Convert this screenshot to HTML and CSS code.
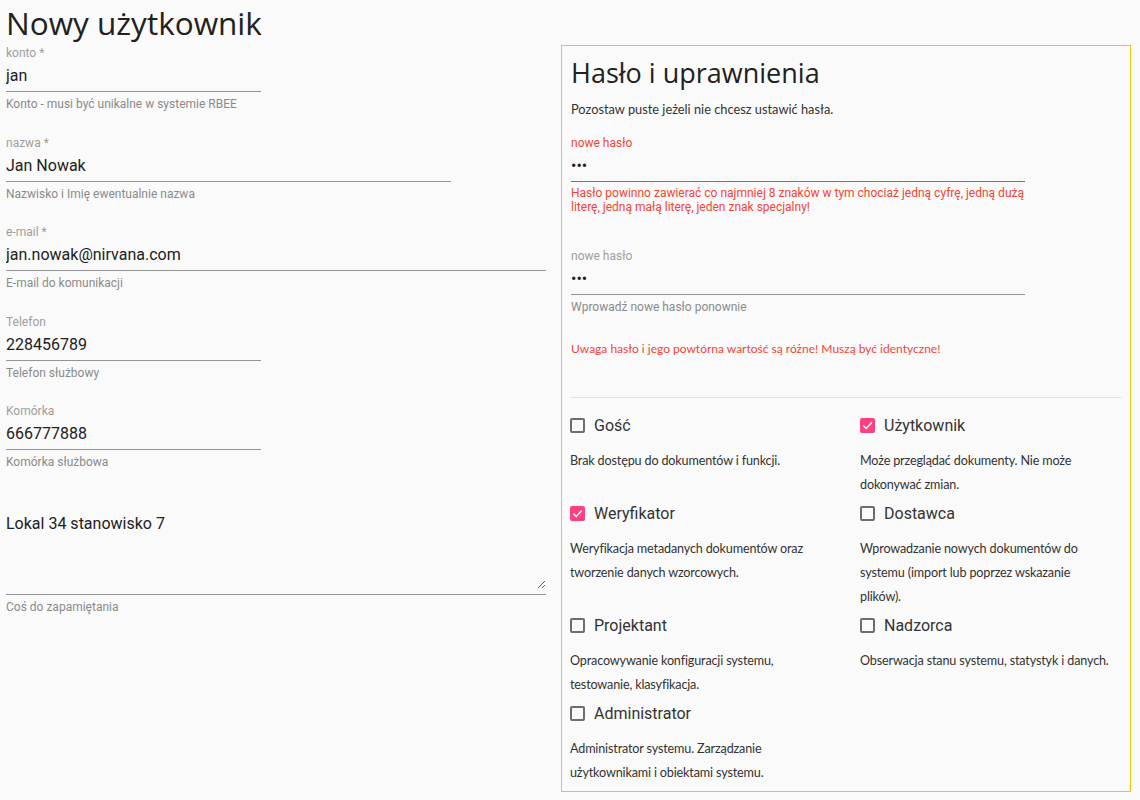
FILE: index.html
```html
<!DOCTYPE html>
<html lang="pl">
<head>
<meta charset="utf-8">
<title>Nowy użytkownik</title>
<link rel="stylesheet" href="styles.css">
</head>
<body>
<h1 class="title">Nowy użytkownik</h1>
<div class="layout">
  <div class="left">
    <div class="field w-s">
      <label class="lbl">konto *</label>
      <div class="control"><input class="inp" type="text" value="jan"></div>
      <div class="hint">Konto - musi być unikalne w systemie RBEE</div>
    </div>
    <div class="field w-m">
      <label class="lbl">nazwa *</label>
      <div class="control"><input class="inp" type="text" value="Jan Nowak"></div>
      <div class="hint">Nazwisko i Imię ewentualnie nazwa</div>
    </div>
    <div class="field w-l">
      <label class="lbl">e-mail *</label>
      <div class="control"><input class="inp" type="text" value="jan.nowak@nirvana.com"></div>
      <div class="hint">E-mail do komunikacji</div>
    </div>
    <div class="field w-s">
      <label class="lbl">Telefon</label>
      <div class="control"><input class="inp" type="text" value="228456789"></div>
      <div class="hint">Telefon służbowy</div>
    </div>
    <div class="field w-s">
      <label class="lbl">Komórka</label>
      <div class="control"><input class="inp" type="text" value="666777888"></div>
      <div class="hint">Komórka służbowa</div>
    </div>
    <div class="field w-l">
      <label class="lbl">&nbsp;</label>
      <div class="control"><textarea class="inp area">Lokal 34 stanowisko 7</textarea></div>
      <div class="hint">Coś do zapamiętania</div>
    </div>
  </div>

  <div class="panel">
    <h2 class="panel-title">Hasło i uprawnienia</h2>
    <p class="intro">Pozostaw puste jeżeli nie chcesz ustawić hasła.</p>

    <div class="field w-p first-pw">
      <label class="lbl lbl-err">nowe hasło</label>
      <div class="control control-err"><input class="inp pw" type="password" value="abc"></div>
      <div class="err">Hasło powinno zawierać co najmniej 8 znaków w tym chociaż jedną cyfrę, jedną dużą literę, jedną małą literę, jeden znak specjalny!</div>
    </div>
    <div class="field w-p second-pw">
      <label class="lbl">nowe hasło</label>
      <div class="control"><input class="inp pw" type="password" value="abd"></div>
      <div class="hint">Wprowadź nowe hasło ponownie</div>
    </div>
    <p class="warn">Uwaga hasło i jego powtórna wartość są różne! Muszą być identyczne!</p>
    <hr class="divider">

    <div class="roles">
      <div class="role">
        <div class="chk-row"><span class="box"></span><span class="role-name">Gość</span></div>
        <p class="desc">Brak dostępu do dokumentów i funkcji.</p>
      </div>
      <div class="role">
        <div class="chk-row"><span class="box on"><svg viewBox="0 0 15 15" width="15" height="15"><path d="M3.3 7.6 L6.2 10.4 L11.8 4.6" fill="none" stroke="#fff" stroke-width="1.4"/></svg></span><span class="role-name">Użytkownik</span></div>
        <p class="desc">Może przeglądać dokumenty. Nie może dokonywać zmian.</p>
      </div>
      <div class="role">
        <div class="chk-row"><span class="box on"><svg viewBox="0 0 15 15" width="15" height="15"><path d="M3.3 7.6 L6.2 10.4 L11.8 4.6" fill="none" stroke="#fff" stroke-width="1.4"/></svg></span><span class="role-name">Weryfikator</span></div>
        <p class="desc">Weryfikacja metadanych dokumentów oraz tworzenie danych wzorcowych.</p>
      </div>
      <div class="role">
        <div class="chk-row"><span class="box"></span><span class="role-name">Dostawca</span></div>
        <p class="desc">Wprowadzanie nowych dokumentów do systemu (import lub poprzez wskazanie plików).</p>
      </div>
      <div class="role">
        <div class="chk-row"><span class="box"></span><span class="role-name">Projektant</span></div>
        <p class="desc">Opracowywanie konfiguracji systemu, testowanie, klasyfikacja.</p>
      </div>
      <div class="role">
        <div class="chk-row"><span class="box"></span><span class="role-name">Nadzorca</span></div>
        <p class="desc">Obserwacja stanu systemu, statystyk i danych.</p>
      </div>
      <div class="role">
        <div class="chk-row"><span class="box"></span><span class="role-name">Administrator</span></div>
        <p class="desc">Administrator systemu. Zarządzanie użytkownikami i obiektami systemu.</p>
      </div>
    </div>
  </div>
</div>
</body>
</html>
```

FILE: styles.css
```css
html, body {
  margin: 0;
  padding: 0;
  background: #fafafa;
}
body {
  font-family: Lato, "Open Sans", sans-serif;
  color: #333;
  padding: 0 6px;
}
.title {
  margin: 0;
  font-family: "Open Sans", sans-serif;
  font-weight: 400;
  font-size: 31.5px;
  line-height: 45px;
  color: #212121;
}
.layout {
  display: flex;
  align-items: flex-start;
}
.left {
  width: 555px;
  flex: none;
}
.field {
  margin-bottom: 22.5px;
  font-family: Roboto, "Liberation Sans", sans-serif;
}
.w-s { width: 255px; }
.w-m { width: 445px; }
.w-l { width: 540px; }
.w-p { width: 454px; }
.lbl {
  display: block;
  font-size: 12px;
  line-height: 16px;
  color: #9e9e9e;
}
.lbl-err { color: #f44336; }
.control {
  padding-bottom: 5px;
  border-bottom: 1px solid #949494;
  margin-top: 5px;
}
.control-err { border-bottom-color: #f44336; }
.inp {
  display: block;
  width: 100%;
  box-sizing: border-box;
  border: 0;
  padding: 0;
  margin: 0;
  background: transparent;
  outline: none;
  font-family: Roboto, "Liberation Sans", sans-serif;
  font-size: 16px;
  line-height: 20px;
  height: 20px;
  color: #212121;
}
.area {
  height: 75px;
  resize: vertical;
}
.hint {
  margin-top: 4px;
  font-size: 12px;
  line-height: 16px;
  color: #8a8a8a;
}
.err {
  margin-top: 4px;
  font-size: 12px;
  line-height: 14px;
  color: #f44336;
}
.panel {
  flex: none;
  width: 570px;
  box-sizing: border-box;
  border: 1px solid #ffc107;
  padding: 0 9px 2px 9px;
}
.panel-title {
  margin: 10px 0 0 0;
  font-family: "Open Sans", sans-serif;
  font-weight: 400;
  font-size: 27px;
  line-height: 34px;
  color: #212121;
}
.intro {
  margin: 10px 0 0 0;
  font-size: 12.8px;
  line-height: 18px;
  color: #333;
}
.first-pw { margin-top: 17px; margin-bottom: 34px; }
.second-pw { margin-bottom: 0; }
.warn {
  margin: 25px 0 0 0;
  font-size: 12px;
  line-height: 18px;
  color: #f44336;
}
.divider {
  margin: 39px 0 0 0;
  border: 0;
  border-top: 1px solid #e0e0e0;
  height: 0;
}
.roles {
  margin-top: 15px;
  margin-right: 7px;
  display: grid;
  grid-template-columns: 250px 1fr;
  column-gap: 40px;
  align-items: start;
}
.role { margin-left: -1px; }
.chk-row {
  display: flex;
  align-items: center;
  height: 24px;
}
.box {
  width: 15px;
  height: 15px;
  box-sizing: border-box;
  border: 2px solid #6d6d6d;
  border-radius: 2px;
  margin-right: 9px;
  flex: none;
  position: relative;
}
.box.on {
  background: #ff4081;
  border-color: #ff4081;
}
.box svg {
  position: absolute;
  left: -2px;
  top: -2px;
}
.role-name {
  font-family: Roboto, "Liberation Sans", sans-serif;
  font-size: 16px;
  color: #333;
}
.desc {
  margin: 12px 0 4px 0;
  font-size: 12.6px;
  letter-spacing: -0.15px;
  line-height: 24px;
  color: #333;
}
```
